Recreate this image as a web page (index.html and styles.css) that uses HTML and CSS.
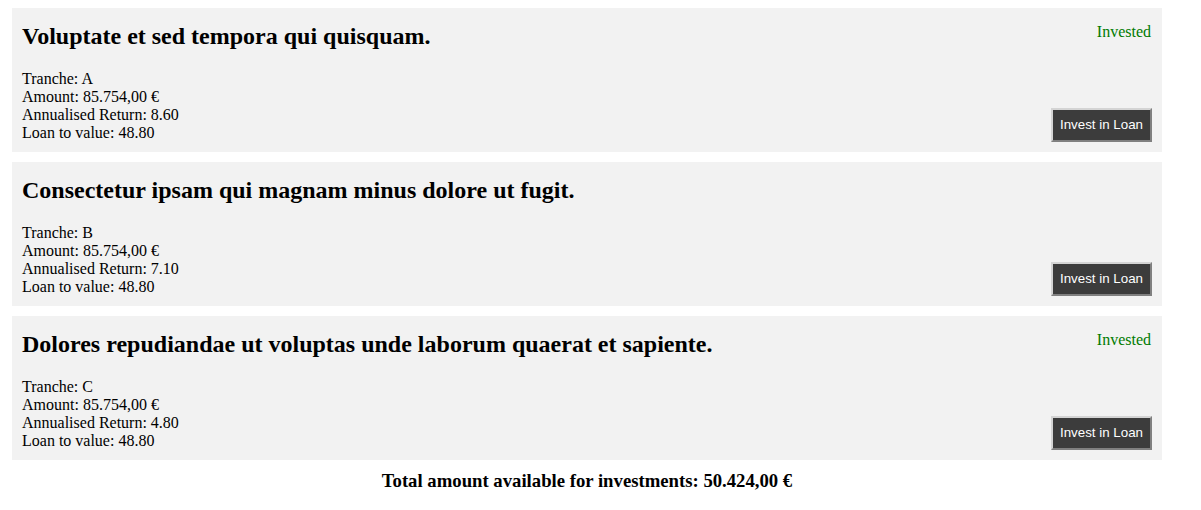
FILE: index.html
```html
<!DOCTYPE html>
<html>
<head>
<meta charset="utf-8">
<link rel="stylesheet" href="styles.css">
</head>
<body>
<div class="loans">
  <div class="loan">
    <div class="loan-main">
      <h2 class="loan-title">Voluptate et sed tempora qui quisquam.</h2>
      <div class="loan-details">
        <div>Tranche: A</div>
        <div>Amount: 85.754,00 €</div>
        <div>Annualised Return: 8.60</div>
        <div>Loan to value: 48.80</div>
      </div>
    </div>
    <div class="loan-side">
      <span class="invested">Invested</span>
      <button class="invest-btn">Invest in Loan</button>
    </div>
  </div>
  <div class="loan">
    <div class="loan-main">
      <h2 class="loan-title">Consectetur ipsam qui magnam minus dolore ut fugit.</h2>
      <div class="loan-details">
        <div>Tranche: B</div>
        <div>Amount: 85.754,00 €</div>
        <div>Annualised Return: 7.10</div>
        <div>Loan to value: 48.80</div>
      </div>
    </div>
    <div class="loan-side">
      <span class="invested"></span>
      <button class="invest-btn">Invest in Loan</button>
    </div>
  </div>
  <div class="loan">
    <div class="loan-main">
      <h2 class="loan-title">Dolores repudiandae ut voluptas unde laborum quaerat et sapiente.</h2>
      <div class="loan-details">
        <div>Tranche: C</div>
        <div>Amount: 85.754,00 €</div>
        <div>Annualised Return: 4.80</div>
        <div>Loan to value: 48.80</div>
      </div>
    </div>
    <div class="loan-side">
      <span class="invested">Invested</span>
      <button class="invest-btn">Invest in Loan</button>
    </div>
  </div>
  <h3 class="total">Total amount available for investments: 50.424,00 €</h3>
</div>
</body>
</html>
```
FILE: styles.css
```css
body {
  margin: 8px;
  font-family: "Liberation Serif", "Times New Roman", serif;
  font-size: 16px;
  color: #000;
  background: #fff;
}

.loans {
  width: 1150px;
  padding: 0 4px;
}

.loan {
  display: flex;
  justify-content: space-between;
  background: #f2f2f2;
  padding: 14px 10px 10px 10px;
  margin-bottom: 10px;
}

.loan-main {
  display: flex;
  flex-direction: column;
}

.loan-title {
  margin: 0 0 20px 0;
  font-size: 24px;
  line-height: 28px;
  font-weight: bold;
}

.loan-details {
  line-height: 18px;
}

.loan-side {
  display: flex;
  flex-direction: column;
  justify-content: space-between;
  align-items: flex-end;
}

.invested {
  color: #007a00;
  line-height: 18px;
  margin: 1px 1px 0 0;
}

.invest-btn {
  font-family: "Liberation Sans", Arial, sans-serif;
  font-size: 13.33px;
  line-height: 16px;
  color: #fff;
  background: #3c3c3c;
  border: 2px solid;
  border-color: #d4d4d4 #808080 #808080 #d4d4d4;
  padding: 7px 7px;
  margin: 0;
}

.total {
  text-align: center;
  font-weight: bold;
  font-size: 18.72px;
  line-height: 22px;
  margin: 0;
}
```
